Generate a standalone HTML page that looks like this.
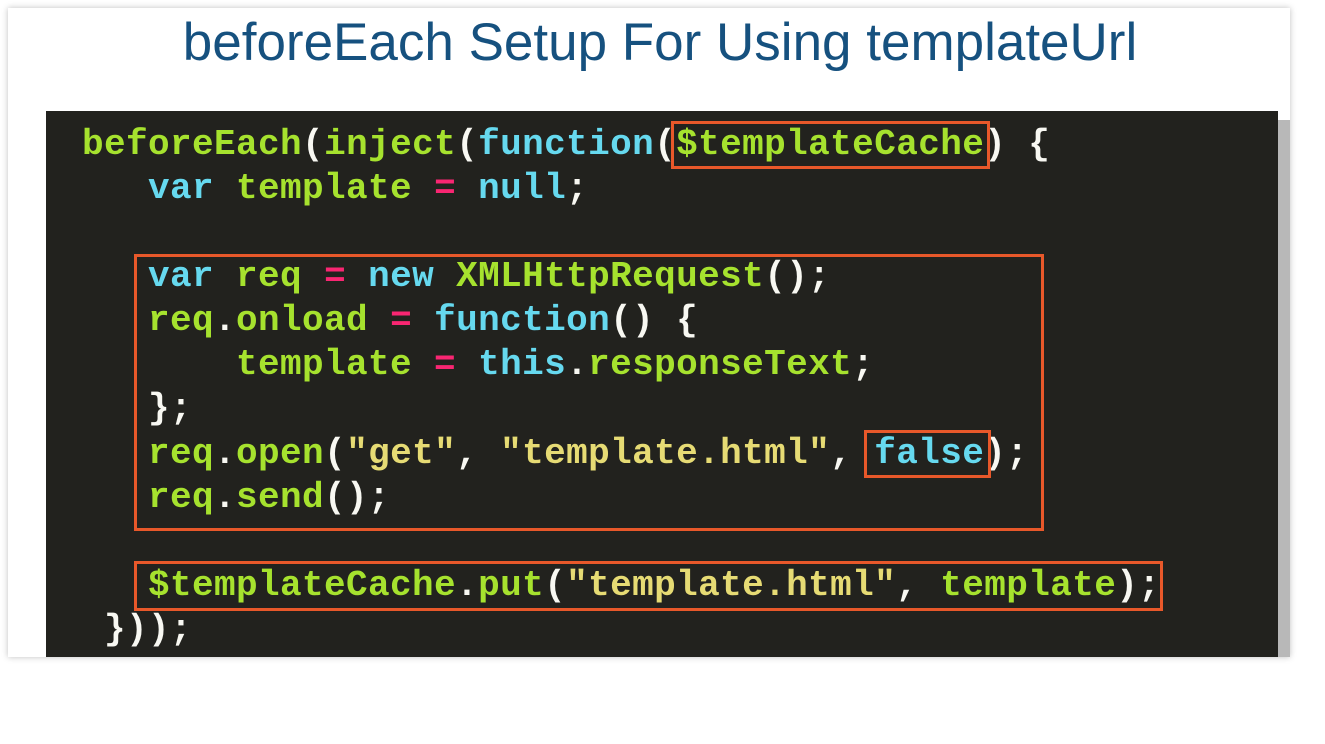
<!DOCTYPE html>
<html><head><meta charset="utf-8"><style>
html,body{margin:0;padding:0;background:#fff;width:1325px;height:744px;overflow:hidden;position:relative}
.slide{position:absolute;left:8px;top:8px;width:1282px;height:649px;background:#fff;box-shadow:0 0 6px rgba(0,0,0,.25)}
.title{position:absolute;left:0;top:7px;width:1320px;text-align:center;font:53px "Liberation Sans",sans-serif;color:#16517f;line-height:72px}
.code{position:absolute;left:46px;top:111px;width:1232px;height:546px;background:#22221e}
.strip{position:absolute;left:1278px;top:120px;width:12px;height:537px;background:#b8b8b8}
.l{position:absolute;font:bold 36px "Liberation Mono",monospace;white-space:pre;line-height:44px;color:#f8f8f2;letter-spacing:0.4px}
.g{color:#a6e22e}.c{color:#66d9ef}.p{color:#f92672}.y{color:#e6db74}.w{color:#f8f8f2}
.b{position:absolute;border:3px solid #e8582a;box-sizing:border-box}
</style></head><body>
<div class="slide"></div>
<div class="title">beforeEach Setup For Using templateUrl</div>
<div class="strip"></div>
<div class="code"></div>
<div class="l" style="left:82px;top:123px"><span class="g">beforeEach</span>(<span class="g">inject</span>(<span class="c">function</span>(<span class="g">$templateCache</span>) {</div>
<div class="l" style="left:148px;top:167px"><span class="c">var</span> <span class="g">template</span> <span class="p">=</span> <span class="c">null</span>;</div>
<div class="l" style="left:148px;top:255px"><span class="c">var</span> <span class="g">req</span> <span class="p">=</span> <span class="c">new</span> <span class="g">XMLHttpRequest</span>();</div>
<div class="l" style="left:148px;top:299px"><span class="g">req</span>.<span class="g">onload</span> <span class="p">=</span> <span class="c">function</span>() {</div>
<div class="l" style="left:236px;top:343px"><span class="g">template</span> <span class="p">=</span> <span class="c">this</span>.<span class="g">responseText</span>;</div>
<div class="l" style="left:148px;top:387px">};</div>
<div class="l" style="left:148px;top:432px"><span class="g">req</span>.<span class="g">open</span>(<span class="y">"get"</span>, <span class="y">"template.html"</span>, <span class="c">false</span>);</div>
<div class="l" style="left:148px;top:476px"><span class="g">req</span>.<span class="g">send</span>();</div>
<div class="l" style="left:148px;top:564px"><span class="g">$templateCache</span>.<span class="g">put</span>(<span class="y">"template.html"</span>, <span class="g">template</span>);</div>
<div class="l" style="left:104px;top:608px">}));</div>
<div class="b" style="left:671px;top:121px;width:319px;height:48px"></div>
<div class="b" style="left:134px;top:254px;width:910px;height:277px"></div>
<div class="b" style="left:864px;top:430px;width:127px;height:48px"></div>
<div class="b" style="left:134px;top:561px;width:1029px;height:50px"></div>
</body></html>
